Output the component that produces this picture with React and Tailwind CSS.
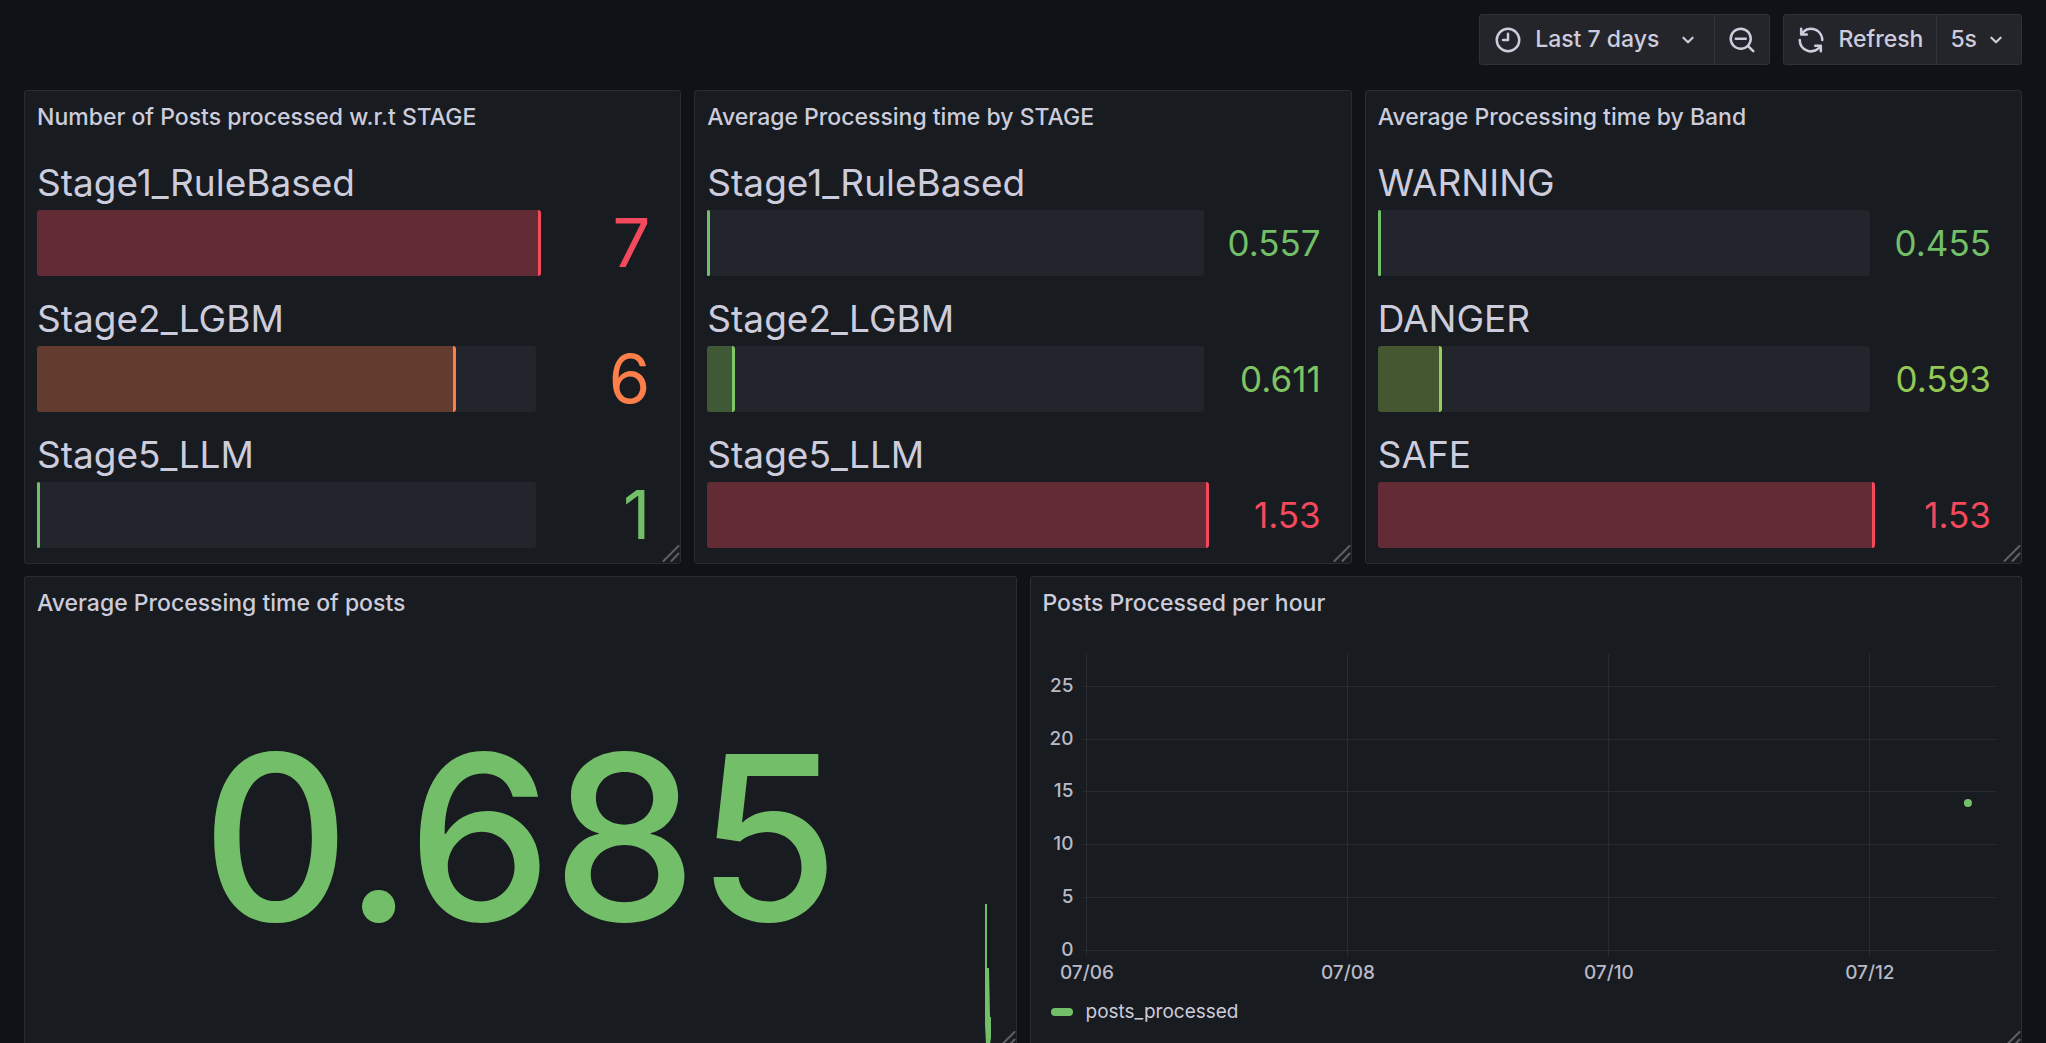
import React from "react";

const ICONS = {
  clock:
    "M12,2A10,10,0,1,0,22,12,10,10,0,0,0,12,2Zm0,18a8,8,0,1,1,8-8A8,8,0,0,1,12,20ZM12,6a1,1,0,0,0-1,1v4H8a1,1,0,0,0,0,2h4a1,1,0,0,0,1-1V7A1,1,0,0,0,12,6Z",
  zoomOut:
    "M21.71,20.29,18,16.61A9,9,0,1,0,16.61,18l3.68,3.68a1,1,0,0,0,1.42,0A1,1,0,0,0,21.71,20.29ZM11,18a7,7,0,1,1,7-7A7,7,0,0,1,11,18Zm4-8H7a1,1,0,0,0,0,2h8a1,1,0,0,0,0-2Z",
  sync:
    "M19.91,15.51H15.38a1,1,0,0,0,0,2h2.4A8,8,0,0,1,4,12a1,1,0,1,0-2,0,10,10,0,0,0,16.88,7.23V21a1,1,0,0,0,2,0V16.5A1,1,0,0,0,19.91,15.51ZM12,2A10,10,0,0,0,5.12,4.77V3a1,1,0,0,0-2,0V7.5a1,1,0,0,0,1,1h4.5a1,1,0,0,0,0-2H6.22A8,8,0,0,1,20,12a1,1,0,0,0,2,0A10,10,0,0,0,12,2Z",
  down:
    "M17,9.17a1,1,0,0,0-1.41,0L12,12.71,8.46,9.17a1,1,0,0,0-1.41,0,1,1,0,0,0,0,1.42l4.24,4.24a1,1,0,0,0,1.42,0L17,10.59A1,1,0,0,0,17,9.17Z",
};

function Icon({ name, size = "size-[30px]" }) {
  return (
    <svg viewBox="0 0 24 24" className={"shrink-0 fill-current " + size} aria-hidden="true">
      <path d={ICONS[name]} />
    </svg>
  );
}

function Toolbar() {
  const group =
    "flex h-[51px] overflow-hidden rounded-[3px] border border-[#2f3137] bg-[#24252b]";
  return (
    <header className="flex justify-end gap-[13px] pt-[14px]">
      <div className={group}>
        <button type="button" className="flex items-center border-r border-[#33353b] pr-[13px] pl-[13px]">
          <Icon name="clock" />
          <span className="mr-4 ml-3">Last 7 days</span>
          <Icon name="down" size="size-[26px]" />
        </button>
        <button type="button" aria-label="Zoom out time range" className="flex w-[54px] items-center justify-center">
          <Icon name="zoomOut" />
        </button>
      </div>
      <div className={group}>
        <button type="button" className="flex items-center gap-3 border-r border-[#33353b] pr-[13px] pl-3">
          <Icon name="sync" />
          Refresh
        </button>
        <button type="button" aria-label="Refresh interval 5s" className="flex items-center gap-[6px] pr-3 pl-[13px]">
          5s
          <Icon name="down" size="size-[26px]" />
        </button>
      </div>
    </header>
  );
}

function Panel({ title, children }) {
  return (
    <section className="relative flex h-[474px] min-w-0 flex-1 flex-col rounded-[3px] border border-[#2a2c32] bg-[#181b1f]">
      <h2 className="flex h-[52px] shrink-0 items-center px-3 text-[23px] font-medium">{title}</h2>
      {children}
      <svg
        viewBox="0 0 18 18"
        className="absolute right-0 bottom-0 size-[18px] stroke-[#5f6067]"
        strokeWidth="2"
        strokeLinecap="round"
        aria-hidden="true"
      >
        <path d="M1.500 16L16.500 1M9.500 16L16.500 8.500" />
      </svg>
    </section>
  );
}

const TONES = {
  green: { text: "text-[#73bf69]", fill: "bg-[#3d5735] border-[#73bf69]" },
  leaf: { text: "text-[#7fc462]", fill: "bg-[#3f5836] border-[#82c765]" },
  lime: { text: "text-[#93c855]", fill: "bg-[#445731] border-[#98cc5c]" },
  orange: { text: "text-[#fb7e4b]", fill: "bg-[#633c2f] border-[#fb7e4b]" },
  red: { text: "text-[#f2495c]", fill: "bg-[#632b35] border-[#f2495c]" },
};

function BarGauge({ rows, valueClass }) {
  return (
    <ul className="flex flex-1 flex-col justify-between px-3 pt-[13px] pb-[15px]">
      {rows.map((row) => (
        <li key={row.label}>
          <div className="text-[37px] leading-[54px]">{row.label}</div>
          <div className="flex h-[66px]">
            <div className="flex min-w-0 flex-1 rounded-[3px] bg-[#22252b]">
              <div
                className={"min-w-[3px] shrink-0 rounded-[3px] border-r-[3px] " + TONES[row.tone].fill}
                style={{ width: row.percent + "%" }}
              />
            </div>
            <div className={"flex shrink-0 items-center justify-end pr-[18px] leading-[66px] " + valueClass + " " + TONES[row.tone].text}>
              {row.value}
            </div>
          </div>
        </li>
      ))}
    </ul>
  );
}

const POSTS = [
  { label: "Stage1_RuleBased", value: "7", percent: 101, tone: "red" },
  { label: "Stage2_LGBM", value: "6", percent: 84, tone: "orange" },
  { label: "Stage5_LLM", value: "1", percent: 0, tone: "green" },
];
const TIME_BY_STAGE = [
  { label: "Stage1_RuleBased", value: "0.557", percent: 0, tone: "green" },
  { label: "Stage2_LGBM", value: "0.611", percent: 5.6, tone: "leaf" },
  { label: "Stage5_LLM", value: "1.53", percent: 101, tone: "red" },
];
const TIME_BY_BAND = [
  { label: "WARNING", value: "0.455", percent: 0, tone: "green" },
  { label: "DANGER", value: "0.593", percent: 13, tone: "lime" },
  { label: "SAFE", value: "1.53", percent: 101, tone: "red" },
];

const Y_TICKS = [
  { label: "25", y: 35 },
  { label: "20", y: 88 },
  { label: "15", y: 140 },
  { label: "10", y: 193 },
  { label: "5", y: 246 },
  { label: "0", y: 299 },
];
const X_TICKS = [
  { label: "07/06", x: "4.55%" },
  { label: "07/08", x: "31.55%" },
  { label: "07/10", x: "58.55%" },
  { label: "07/12", x: "85.55%" },
];

function PostsChart() {
  return (
    <div className="px-3 pt-[22px]">
      <svg className="block h-[336px] w-full overflow-visible" role="img" aria-label="Posts processed per hour">
        <g stroke="#282b2f" shapeRendering="crispEdges">
          {Y_TICKS.map((t) => (
            <line key={t.label} x1="4.1%" x2="98.6%" y1={t.y} y2={t.y} />
          ))}
          {X_TICKS.map((t) => (
            <line key={t.label} x1={t.x} x2={t.x} y1="3" y2="305" />
          ))}
        </g>
        <g className="fill-[#b9b9c7] text-[19px] font-medium">
          {Y_TICKS.map((t) => (
            <text key={t.label} x="3.15%" y={t.y + 6} textAnchor="end">
              {t.label}
            </text>
          ))}
          {X_TICKS.map((t) => (
            <text key={t.label} x={t.x} y="328" textAnchor="middle">
              {t.label}
            </text>
          ))}
        </g>
        <circle cx="95.7%" cy="152" r="4" fill="#73bf69" />
      </svg>
      <div className="flex h-[50px] items-center gap-[13px] pl-2 text-[19px]">
        <span className="h-2 w-[22px] rounded-full bg-[#73bf69]" />
        posts_processed
      </div>
    </div>
  );
}

export default function App() {
  return (
    <div className="flex h-screen flex-col overflow-hidden bg-[#111217] px-6 font-['Inter',sans-serif] text-[#ccccdc]">
      <div className="text-[23px] font-medium">
        <Toolbar />
      </div>
      <main className="flex flex-col gap-3 pt-[25px]">
        <div className="flex gap-[13px]">
          <Panel title="Number of Posts processed w.r.t STAGE">
            <BarGauge rows={POSTS} valueClass="w-[132px] text-[67px]" />
          </Panel>
          <Panel title="Average Processing time by STAGE">
            <BarGauge rows={TIME_BY_STAGE} valueClass="w-[135px] text-[35px]" />
          </Panel>
          <Panel title="Average Processing time by Band">
            <BarGauge rows={TIME_BY_BAND} valueClass="w-[139px] text-[35px]" />
          </Panel>
        </div>
        <div className="flex gap-[13px]">
          <Panel title="Average Processing time of posts">
            <div className="flex flex-1 items-center justify-center pb-1 text-[230px] leading-none font-medium text-[#73bf69]">
              0.685
            </div>
            <svg
              viewBox="0 0 8 140"
              className="absolute right-[24px] bottom-[5px] h-[140px] w-2 fill-[#73bf69]"
              aria-hidden="true"
            >
              <path d="M1 0H3V64H5L6 113H7V134L6 140H2L1 120Z" />
            </svg>
          </Panel>
          <Panel title="Posts Processed per hour">
            <PostsChart />
          </Panel>
        </div>
      </main>
    </div>
  );
}
